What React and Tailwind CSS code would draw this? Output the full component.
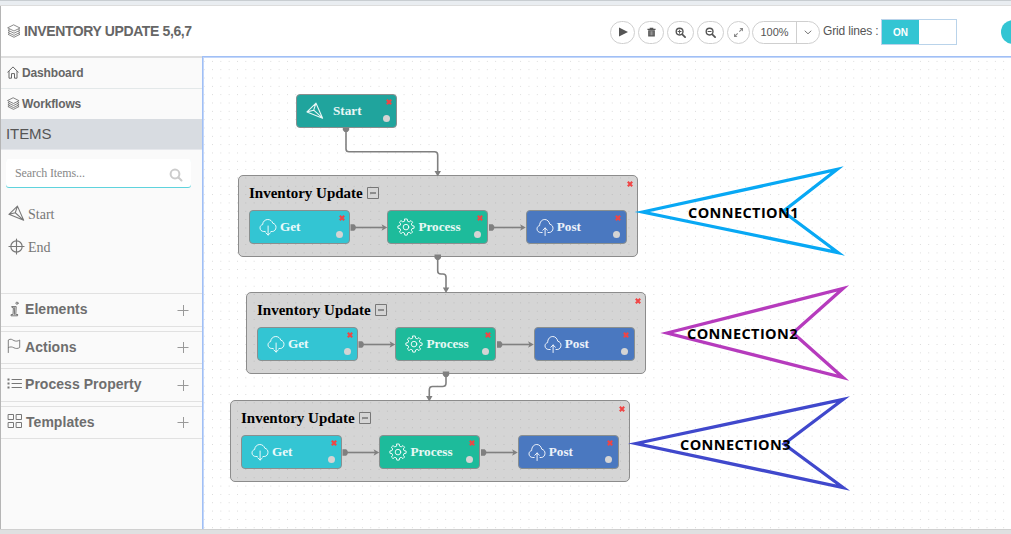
import React from "react";

const serif = "font-['Liberation_Serif',serif]";
const line = { fill: "none", stroke: "currentColor", strokeWidth: 1, strokeLinecap: "round", strokeLinejoin: "round" };

const Layers = ({ className }) => (
  <svg viewBox="0 0 14 14" className={className} {...line} strokeWidth="0.85">
    <path d="M7 1 13 4 7 7 1 4ZM2.4 5.4 1 6.2 7 9.2 13 6.2 11.6 5.4M2.4 7.6 1 8.4 7 11.4 13 8.4 11.6 7.6M2.4 9.5 1 10.3 7 13.3 13 10.3 11.6 9.5" />
  </svg>
);
const Home = ({ className }) => (
  <svg viewBox="0 0 12 13" className={className} {...line}>
    <path d="M.7 6.2 6 .9 11.3 6.2M2 5.5V12.2H4.5V7.6H7.5V12.2H10V5.5" />
  </svg>
);
const Plane = ({ className }) => (
  <svg viewBox="0 0 18 18" className={className} {...line} strokeWidth="1.1">
    <path d="M10 1.2 16.6 16.2 1 9.9ZM1 9.9 7.7 8.2 16.6 16.2M10 1.2 7.7 8.2" />
  </svg>
);
const Target = ({ className }) => (
  <svg viewBox="0 0 18 18" className={className} {...line} strokeWidth="1.2">
    <circle cx="9" cy="9" r="6" />
    <path d="M1 9H17M9 1V17" />
  </svg>
);
const CloudDown = ({ className }) => (
  <svg viewBox="0 0 18 18" className={className} {...line}>
    <path d="M6.2 13.5H4.8C2.7 13.5 1 12 1 9.9 1 8.1 2.2 6.9 3.6 6.6 3.8 3.6 6 1.5 8.8 1.5 11.2 1.5 13.1 3 13.8 5.2 15.8 5.7 17 7.3 17 9.3 17 11.7 15.3 13.5 13.2 13.5H12M9.1 8V17M6.8 14.9 9.1 17 11.4 14.9" />
  </svg>
);
const CloudUp = ({ className }) => (
  <svg viewBox="0 0 18 18" className={className} {...line}>
    <path d="M6.2 14.5H4.8C2.7 14.5 1 13 1 10.9 1 9.1 2.2 7.9 3.6 7.6 3.8 3.6 6 1.5 8.8 1.5 11.2 1.5 13.1 3.4 13.8 6.2 15.8 6.7 17 8.3 17 10.3 17 12.7 15.3 14.5 13.2 14.5H12M9.1 10V17.5M6.8 12.2 9.1 10 11.4 12.2" />
  </svg>
);
const Gear = ({ className }) => (
  <svg viewBox="0 0 18 18" className={className} {...line}>
    <path d="M7.8 1H10.2L10.6 3.2 12.2 3.9 14 2.6 15.6 4.2 14.3 6 15 7.6 17.1 8V10.2L15 10.6 14.3 12.2 15.6 14 14 15.6 12.2 14.3 10.6 15 10.2 17.1H7.8L7.4 15 5.8 14.3 4 15.6 2.4 14 3.7 12.2 3 10.6 .9 10.2V8L3 7.6 3.7 6 2.4 4.2 4 2.6 5.8 3.9 7.4 3.2Z" />
    <circle cx="9" cy="9.1" r="2.8" />
  </svg>
);
const Info = ({ className }) => (
  <svg viewBox="0 0 14 16" className={className} {...line}>
    <circle cx="10" cy="2.2" r="1.1" />
    <path d="M5 5.6H9.2L8.8 13.6H10.6M5 5.6V6.6H6.4L6 13.6H4V14.8H10.6V13.6M7.7 6.6 7.4 13.4" />
  </svg>
);
const Flag = ({ className }) => (
  <svg viewBox="0 0 15 16" className={className} {...line}>
    <path d="M1.4 15V1.6C4-.2 5.4 1.1 7.4 2.2 9.4 3.1 11.6 3 13.6 1.6V9.6C11.6 11 9.4 10.9 7.4 9.9 5.4 8.8 3.6 8.6 1.4 9.7" />
  </svg>
);
const ListIcon = ({ className }) => (
  <svg viewBox="0 0 15 14" className={className} {...line}>
    <path d="M5 2.5H14.5M5 6.5H14.5M5 10.5H14.5" />
    <path d="M.5 2.5H2.5M.5 6.5H2.5M.5 10.5H2.5" strokeWidth="2" strokeLinecap="butt" />
  </svg>
);
const GridIcon = ({ className }) => (
  <svg viewBox="0 0 16 16" className={className} {...line}>
    <path d="M1.5 1.5H6.5V6.5H1.5ZM9.5 1.5H14.5V6.5H9.5ZM1.5 9.5H6.5V14.5H1.5ZM9.5 9.5H14.5V14.5H9.5Z" />
  </svg>
);
const Magnifier = ({ sign }) => (
  <svg viewBox="0 0 12 12" className="size-[11px] text-[#555]" {...line} strokeWidth="1.5">
    <circle cx="5" cy="5" r="3.7" />
    <path d="M8.2 8.2 11 11" strokeWidth="1.9" />
    <path d={sign === "in" ? "M3.3 5H6.7M5 3.3V6.7" : "M3.3 5H6.7"} strokeWidth="1.1" />
  </svg>
);

const RoundButton = ({ className, children }) => (
  <button className={`flex h-[23px] shrink-0 items-center justify-center rounded-full border border-[#cfcfcf] bg-white text-[#555] ${className}`}>{children}</button>
);

const Header = () => (
  <header className="flex h-[50px] shrink-0 items-center bg-white pl-[6px]">
    <Layers className="size-[14px] shrink-0 text-[#777]" />
    <h1 className="ml-[3px] w-[586px] shrink-0 whitespace-nowrap text-[14px] font-bold tracking-[-0.38px] text-[#666]">INVENTORY UPDATE 5,6,7</h1>
    <div className="mt-[2px] flex shrink-0 items-center">
      <RoundButton className="w-[25px]">
        <svg viewBox="0 0 10 10" className="size-[10px]"><path d="M1 .5 10 5 1 9.5Z" fill="#555" /></svg>
      </RoundButton>
      <RoundButton className="ml-[3px] w-[26px]">
        <svg viewBox="0 0 10 11" className="h-[10px] w-[9px]">
          <path d="M3 2V.8H7V2H9.5V3.2H.5V2ZM1.3 3.6H8.7V10.5H1.3Z" fill="#555" />
          <path d="M3.5 4.6V9.2M5 4.6V9.2M6.5 4.6V9.2" stroke="#ccc" strokeWidth=".6" />
        </svg>
      </RoundButton>
      <RoundButton className="ml-[3px] w-[27px]"><Magnifier sign="in" /></RoundButton>
      <RoundButton className="ml-[3px] w-[27px]"><Magnifier sign="out" /></RoundButton>
      <RoundButton className="ml-[3px] w-[23px]">
        <svg viewBox="0 0 11 11" className="size-[11px]">
          <path d="M6.5 1H10V4.5ZM1 6.5V10H4.5Z" fill="#888" />
          <path d="M8.7 2.3 6.3 4.7M4.7 6.3 2.3 8.7" stroke="#888" strokeWidth="1.1" />
        </svg>
      </RoundButton>
      <div className="ml-[2px] flex h-[23px] w-[68px] items-center rounded-full border border-[#cfcfcf] text-[11px] text-[#555]">
        <span className="flex h-full w-[44px] items-center justify-center border-r border-[#cfcfcf]">100%</span>
        <svg viewBox="0 0 8 5" className="ml-[7px] h-[5px] w-[8px]" {...line} stroke="#777"><path d="M1 1 4 3.8 7 1" /></svg>
      </div>
      <span className="-mt-[2px] ml-[3px] w-[58px] whitespace-nowrap text-[12px] tracking-[-0.15px] text-[#555]">Grid lines :</span>
      <div className="flex h-[26px] w-[76px] border border-[#b9d3ea] bg-white">
        <span className="flex w-[37px] items-center justify-center bg-[#33c5d3] text-[10px] font-bold text-white">ON</span>
      </div>
      <span className="ml-[44px] size-[24px] rounded-full bg-[#33c5d3]" />
    </div>
  </header>
);

const Panel = ({ icon, label, className }) => (
  <div className={`flex shrink-0 items-center border-y border-[#e1e1e1] pr-[13px] pb-px pl-[6px] text-[#777] ${className}`}>
    {icon}
    <span className="flex-1 text-[14px] font-bold tracking-[0.04px] text-[#6e6e6e]">{label}</span>
    <svg viewBox="0 0 12 12" className="size-3" fill="none" stroke="#999"><path d="M.5 6.5H11.5M6.5 1V12" /></svg>
  </div>
);

const Sidebar = () => (
  <aside className="flex w-[201px] shrink-0 flex-col border-t-2 border-[#dfdfdf] bg-[#fafafa] text-[#666]">
    <div className="flex h-[31px] items-center border-b border-[#e3e8e9] pl-[6px]">
      <Home className="-mt-[2px] h-[13px] w-[12px]" />
      <span className="ml-[3px] text-[12px] font-bold tracking-[-0.15px]">Dashboard</span>
    </div>
    <div className="flex h-[30px] items-center pl-[6px]">
      <Layers className="-mt-[2px] size-[13px]" />
      <span className="ml-[2px] text-[12px] font-bold tracking-[-0.15px]">Workflows</span>
    </div>
    <div className="flex h-[31px] items-center border-b border-[#e6e8ec] bg-[#d8dce1] pl-[5px] text-[15px] tracking-[-0.1px] text-[#555]">ITEMS</div>
    <div className={`mt-[9px] mb-px ml-[5px] flex h-[28px] w-[185px] items-center rounded-[3px] bg-white pr-[8px] pl-[9px] shadow-[0_1px_0_#5fd3dd] ${serif}`}>
      <span className="flex-1 text-[12px] tracking-[-0.1px] text-[#888]">Search Items...</span>
      <svg viewBox="0 0 14 14" className="mt-[3px] size-[14px]" {...line} stroke="#ccc" strokeWidth="2"><circle cx="6" cy="6" r="4.4" /><path d="m9.5 9.5 3 3" /></svg>
    </div>
    <div className={`mt-[17px] flex h-[18px] items-center pl-[7px] text-[14px] text-[#777] ${serif}`}><Plane className="-mt-[2px] mr-[3px] size-[17px]" />Start</div>
    <div className={`mt-[15px] flex h-[18px] items-center pl-[7px] text-[14px] text-[#777] ${serif}`}><Target className="-mt-[2px] mr-[3px] size-[17px]" />End</div>
    <div className="mt-[37px] flex flex-col gap-[4px]">
      <Panel className="h-[34px]" label="Elements" icon={<Info className="-mt-[2px] mr-[4px] h-[16px] w-[14px]" />} />
      <Panel className="h-[33px]" label="Actions" icon={<Flag className="-mt-[3px] mr-[4px] h-[16px] w-[14px]" />} />
      <Panel className="h-[34px]" label="Process Property" icon={<ListIcon className="-mt-[2px] mr-[3px] h-[14px] w-[15px]" />} />
      <Panel className="h-[33px]" label="Templates" icon={<GridIcon className="-mt-[3px] mr-[3px] h-[16px] w-[16px]" />} />
    </div>
  </aside>
);

const Cross = ({ className }) => (
  <svg viewBox="0 0 6 6" className={`absolute size-[6px] ${className}`}><path d="M.8 .8 5.2 5.2M5.2 .8 .8 5.2" stroke="#f04545" strokeWidth="2.1" /></svg>
);

const Node = ({ className, icon, label, start }) => (
  <div className={`flex h-[34px] w-[101px] shrink-0 items-center rounded-[4px] border border-[#8a8f8f] pl-[9px] text-[13.2px] font-bold text-white/90 ${serif} ${className}`}>
    {icon}
    <span className={start ? "ml-[9px]" : "ml-[3px]"}>{label}</span>
    <Cross className="top-[4px] right-[4.5px]" />
    <span className="absolute right-[6px] bottom-[5px] size-[7px] rounded-full bg-[#d4d4d4]" />
  </div>
);

const Group = ({ className }) => (
  <section className={`absolute h-[82px] w-[400px] rounded-[5px] border border-[#8c8c8c] bg-[#888888]/35 pt-[8px] pl-[10px] ${className}`}>
    <Cross className="top-[5px] right-[4.5px]" />
    <div className={`flex h-[18px] items-center text-[15px] font-bold text-black ${serif}`}>
      <span>Inventory Update</span>
      <svg viewBox="0 0 12 12" className="ml-[4px] size-3" fill="none" stroke="#777"><path d="M.5.5H11.5V11.5H.5Z" /><path d="M3 6H9" stroke="#444" /></svg>
    </div>
    <div className="mt-[8px] flex gap-[37.4px]">
      <Node className="relative bg-[#33c5d3]" icon={<CloudDown className="size-[18px]" />} label="Get" />
      <Node className="relative bg-[#1dbb9b]" icon={<Gear className="size-[18px]" />} label="Process" />
      <Node className="relative bg-[#4a78c0]" icon={<CloudUp className="size-[18px]" />} label="Post" />
    </div>
  </section>
);

const groups = [[238, 175], [246, 292], [230, 400]];

const Connectors = () => (
  <svg viewBox="203 57 808 473" className="absolute top-0 left-0 h-[473px] w-[808px]" fill="none" stroke="#808080" strokeWidth="1.6">
    <path d="M346 128V149Q346 151.8 349 151.8H434.5Q437.7 151.8 437.7 155V172" />
    <path d="M437.7 258V271Q437.7 274 441 274H443Q446 274 446 277V289" />
    <path d="M446 374V383Q446 386.5 442.5 386.5H432.5Q429.3 386.5 429.3 390V397" />
    <g fill="#808080" stroke="none">
      <path d="M434.5 171H441L437.7 176.5ZM442.8 287.5H449.3L446 293ZM426 396H432.5L429.3 401.5Z" />
      <path d="M342.8 127.5H349.2V130L347.5 132H344.5L342.8 130ZM434.5 254.5H441V258L439 260H436.5L434.5 258ZM442.8 371.5H449.2V375L447.5 377H444.5L442.8 375Z" />
    </g>
    {groups.map(([x, y]) => (
      <g key={y}>
        {[115, 253.5].map((dx) => (
          <g key={dx} transform={`translate(${x + dx} ${y + 52.5})`}>
            <path d="M0 0H31" />
            <path d="M-2.5-3.2H1.2L2.7-1.5V1.5L1.2 3.2H-2.5ZM28.5-3.2 34.3 0 28.5 3.2 30 0Z" fill="#808080" stroke="none" />
          </g>
        ))}
      </g>
    ))}
    <g strokeWidth="3.3" strokeMiterlimit="12">
      <path d="M642.5 212 837 169.5 783 211.5 838 252.5Z" stroke="#08a8f4" />
      <path d="M667 333 843 288.5 793 333 843 377.5Z" stroke="#b63bbd" />
      <path d="M636 443.5 843 399.5 784 444 843 487.5Z" stroke="#4048cc" />
    </g>
  </svg>
);

const callout = "absolute whitespace-nowrap text-[14.5px] leading-[20px] font-bold tracking-[0.4px] text-black font-['Open_Sans',sans-serif]";

const Canvas = () => (
  <main className="relative flex-1 overflow-hidden border-t border-l border-[#a0bff5] bg-white shadow-[inset_1px_1px_0_#c2d6fa]">
    <div className="absolute inset-0 bg-[radial-gradient(circle,#d8d8d8_0.65px,transparent_0.9px)] bg-[size:8.34px_8.34px] bg-[position:-3px_0.2px]" />
    <Node start className="absolute top-[37px] left-[93px] bg-[#20a49d]" icon={<Plane className="size-[18px]" />} label="Start" />
    <Group className="top-[118px] left-[35px]" />
    <Group className="top-[235px] left-[43px]" />
    <Group className="top-[343px] left-[27px]" />
    <Connectors />
    <span className={`${callout} top-[146px] left-[485px]`}>CONNECTION1</span>
    <span className={`${callout} top-[267px] left-[484px]`}>CONNECTION2</span>
    <span className={`${callout} top-[378px] left-[477px]`}>CONNECTION3</span>
  </main>
);

export default function App() {
  return (
    <div className="flex h-[534px] w-[1011px] flex-col overflow-hidden bg-white font-['Liberation_Sans',sans-serif]">
      <div className="h-[6px] shrink-0 border-t border-b border-t-[#c8cdd1] border-b-[#dddddd] bg-[#e9edf1]" />
      <div className="flex h-[523px] shrink-0 flex-col border-l border-[#b5b5b5]">
        <Header />
        <div className="flex min-h-0 flex-1">
          <Sidebar />
          <Canvas />
        </div>
      </div>
      <div className="flex-1 border-t border-[#d0d0d0] bg-[#dfe0e1]" />
    </div>
  );
}
